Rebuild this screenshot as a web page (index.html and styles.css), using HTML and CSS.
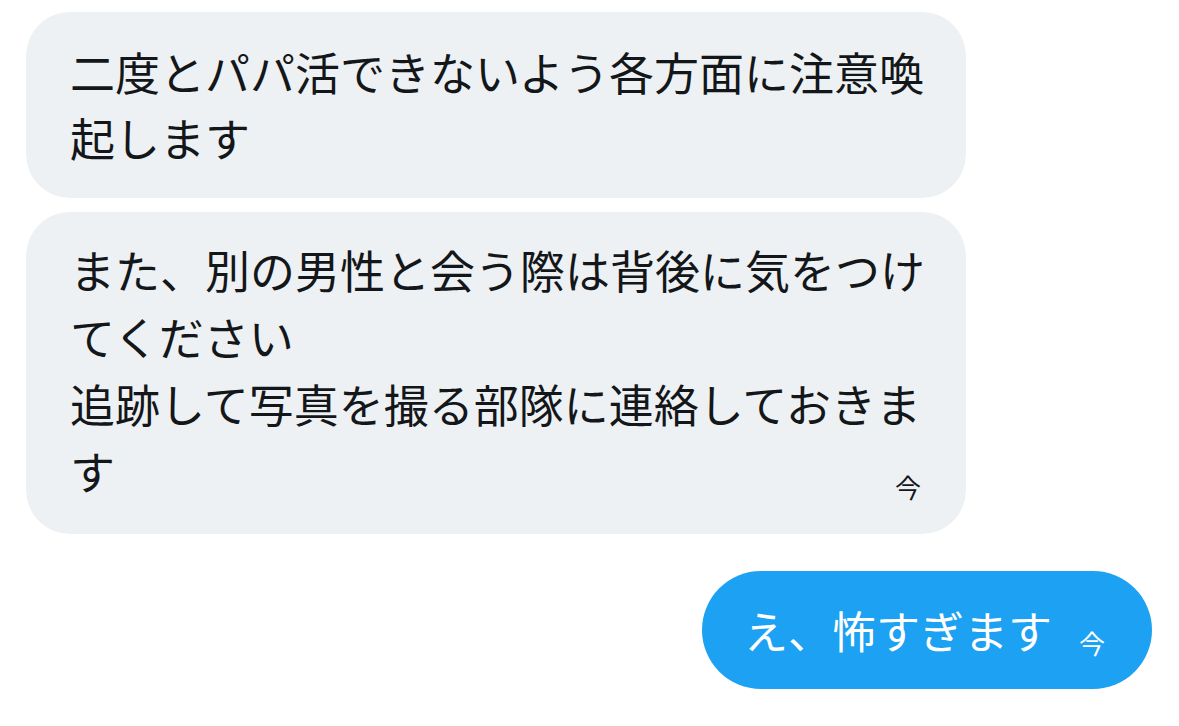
FILE: index.html
```html
<!DOCTYPE html>
<html lang="ja">
<head>
<meta charset="utf-8">
<link rel="stylesheet" href="styles.css">
</head>
<body>
<div class="thread">
  <div class="bubble in first">
    <p class="text">二度とパパ活できないよう各方面に注意喚起します</p>
  </div>
  <div class="bubble in second">
    <p class="text">また、別の男性と会う際は背後に気をつけてください<br>追跡して写真を撮る部隊に連絡しておきま</p>
    <div class="last">
      <span class="text">す</span>
      <span class="time">今</span>
    </div>
  </div>
  <div class="bubble out">
    <span class="text">え、怖すぎます</span>
    <span class="time">今</span>
  </div>
</div>
</body>
</html>
```
FILE: styles.css
```css
html, body {
  margin: 0;
  padding: 0;
  background: #ffffff;
}
body {
  width: 1179px;
  height: 726px;
  overflow: hidden;
  font-family: "Noto Sans CJK JP", "Noto Sans", sans-serif;
}
.thread {
  display: flex;
  flex-direction: column;
  align-items: flex-start;
  padding: 12px 27px 0 26px;
}
.bubble {
  box-sizing: border-box;
  border-radius: 44px;
}
.bubble .text {
  margin: 0;
  font-size: 45px;
  line-height: 66px;
  color: #14171a;
}
.in {
  width: 940px;
  background: #eef1f3;
  padding: 27px 40px 27px 44px;
}
.second {
  margin-top: 14px;
  padding-top: 24px;
  padding-bottom: 30px;
}
.second .text {
  line-height: 67px;
}
.last {
  display: flex;
  justify-content: space-between;
  align-items: flex-end;
}
.in .time {
  font-size: 26px;
  line-height: 30px;
  margin-bottom: 2px;
  margin-right: 5px;
  color: #14171a;
}
.out {
  align-self: flex-end;
  margin-top: 37px;
  background: #1da1f2;
  border-radius: 59px;
  height: 118px;
  padding: 0 47px 0 42px;
  display: flex;
  align-items: center;
}
.out .text {
  color: #ffffff;
  font-size: 44px;
  line-height: 66px;
}
.out .time {
  color: #ffffff;
  font-size: 26px;
  line-height: 30px;
  margin-left: 27px;
  margin-top: 26px;
}
```
